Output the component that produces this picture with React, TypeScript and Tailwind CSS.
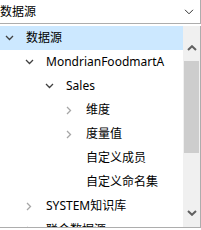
import React from "react";

const FONT = { fontFamily: '"Noto Sans", "Noto Sans CJK SC", sans-serif' };

function Down({ color = "#404040" }: { color?: string }) {
  return (
    <svg width="9" height="6" viewBox="0 0 9 6">
      <path d="M1 1 L4.5 4.5 L8 1" fill="none" stroke={color} strokeWidth="1.3" />
    </svg>
  );
}

function Right({ color = "#a6a6a6" }: { color?: string }) {
  return (
    <svg width="6" height="9" viewBox="0 0 6 9">
      <path d="M1 1 L4.5 4.5 L1 8" fill="none" stroke={color} strokeWidth="1.3" />
    </svg>
  );
}

type Row = { label: string; level: number; icon: "down" | "right" | "none"; selected?: boolean };

const rows: Row[] = [
  { label: "数据源", level: 0, icon: "down", selected: true },
  { label: "MondrianFoodmartA", level: 1, icon: "down" },
  { label: "Sales", level: 2, icon: "down" },
  { label: "维度", level: 3, icon: "right" },
  { label: "度量值", level: 3, icon: "right" },
  { label: "自定义成员", level: 3, icon: "none" },
  { label: "自定义命名集", level: 3, icon: "none" },
  { label: "SYSTEM知识库", level: 1, icon: "right" },
  { label: "联合数据源", level: 1, icon: "right" },
];

export default function App() {
  return (
    <div className="w-[201px] h-[230px] overflow-hidden bg-white text-[12px] text-black" style={FONT}>
      <div className="-mt-px h-[25px] w-[201px] border border-[#adadad] border-l-0 flex items-center justify-between">
        <span className="leading-none pt-px">数据源</span>
        <span className="mr-[6px] flex items-center">
          <svg width="10" height="6" viewBox="0 0 10 6">
            <path d="M1 0.8 L5 4.8 L9 0.8" fill="none" stroke="#333" strokeWidth="1" />
          </svg>
        </span>
      </div>
      <div className="mt-[2px] w-[201px] h-[202px] border-r border-b border-[#adadad] flex overflow-hidden">
        <div className="w-[183px] flex flex-col">
          {rows.map((r, i) => (
            <div
              key={i}
              className={`h-[24px] shrink-0 flex items-center ${r.selected ? "bg-[#cce8ff]" : ""}`}
              style={{ paddingLeft: 2 + 20 * r.level }}
            >
              <span className="w-[14px] h-[24px] flex items-center justify-center shrink-0">
                {r.icon === "down" && <Down />}
                {r.icon === "right" && <Right />}
              </span>
              <span className="ml-[10px] whitespace-nowrap leading-none">{r.label}</span>
            </div>
          ))}
        </div>
        <div className="w-[17px] bg-[#f0f0f0] flex flex-col">
          <div className="h-[35px] flex justify-center items-start pt-[19px] shrink-0">
            <svg width="10" height="6" viewBox="0 0 10 6">
              <path d="M1 5 L5 1.2 L9 5" fill="none" stroke="#606060" strokeWidth="2" />
            </svg>
          </div>
          <div className="h-[92px] mx-px bg-[#cdcdcd] shrink-0" />
          <div className="flex-1" />
          <div className="h-[28px] flex justify-center items-center shrink-0">
            <svg width="10" height="6" viewBox="0 0 10 6">
              <path d="M1 1 L5 4.8 L9 1" fill="none" stroke="#606060" strokeWidth="2" />
            </svg>
          </div>
        </div>
      </div>
    </div>
  );
}
